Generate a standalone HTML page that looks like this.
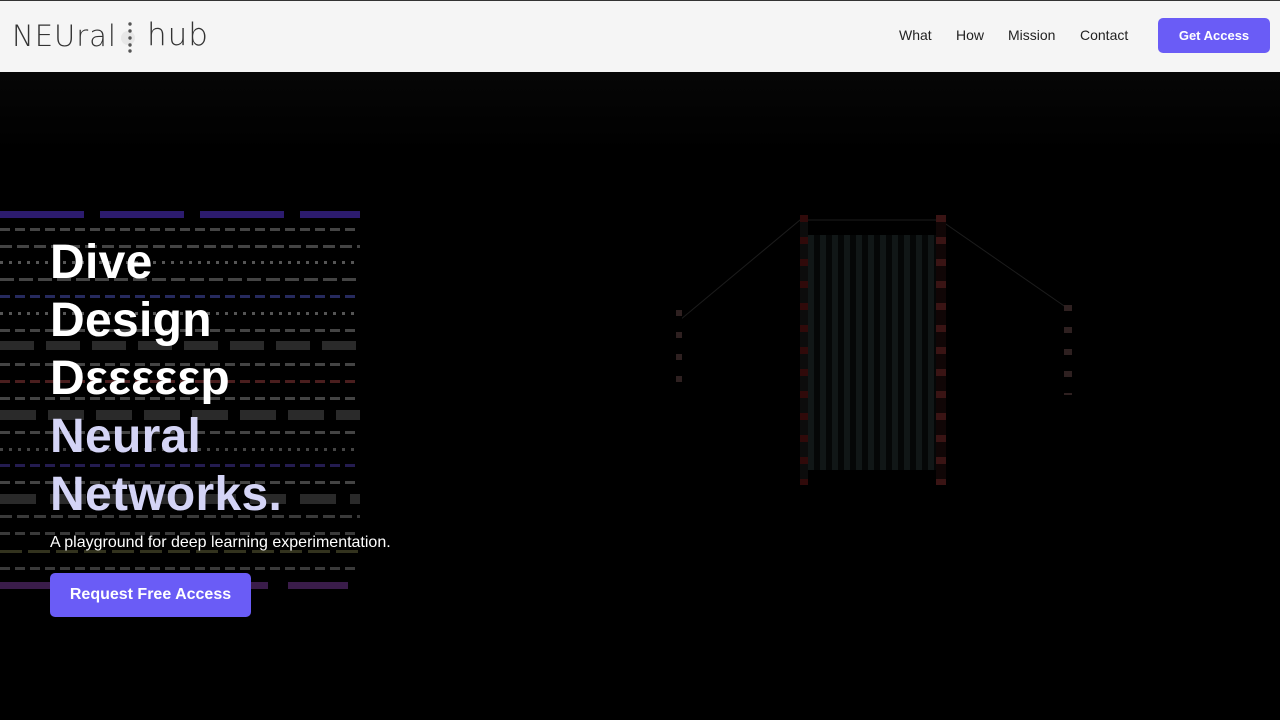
<!DOCTYPE html>
<html><head><meta charset="utf-8"><style>
*{margin:0;padding:0;box-sizing:border-box}
body{width:1280px;height:720px;overflow:hidden;background:#000;font-family:"Liberation Sans",sans-serif;position:relative}
.top{position:absolute;left:0;top:0;width:1280px;height:1px;background:#333}
nav{position:absolute;left:0;top:1px;width:1280px;height:71px;background:#f5f5f5}
.links a{position:absolute;top:26px;font-size:14px;color:#222;text-decoration:none}
.btn{position:absolute;background:#6a5cf6;color:#fff;font-weight:bold;border-radius:5px;text-align:center}
.row{position:absolute;left:0;width:360px}
.h{position:absolute;left:50px;font-weight:bold;font-size:48px;color:#fff;line-height:58px;letter-spacing:0.3px}
</style></head><body>
<div class="top"></div>
<nav>
<div style="position:absolute;left:12px;top:18px;font-family:'DejaVu Sans';font-weight:200;letter-spacing:1px;font-size:29px;color:#333">NEUral</div>
<svg style="position:absolute;left:114px;top:18px" width="30" height="34"><circle cx="14" cy="19" r="7" fill="#ddd" opacity=".6"/><circle cx="16" cy="5" r="1.7" fill="#555"/><circle cx="16" cy="12" r="1.7" fill="#555"/><circle cx="16" cy="19" r="1.7" fill="#555"/><circle cx="16" cy="26" r="1.7" fill="#555"/><circle cx="16" cy="32" r="1.7" fill="#555"/></svg>
<div style="position:absolute;left:147px;top:16px;font-family:'DejaVu Sans';font-size:31px;font-weight:200;color:#333;letter-spacing:1px">hub</div>
<div class="links"><a style="left:899px">What</a><a style="left:956px">How</a><a style="left:1008px">Mission</a><a style="left:1080px">Contact</a></div>
<div class="btn" style="left:1158px;top:17px;width:112px;height:35px;line-height:35px;font-size:13px">Get Access</div>
</nav>
<div style="position:absolute;left:0;top:72px;width:1280px;height:80px;background:linear-gradient(#060606,#000)"></div>
<div class="row" style="top:211px;height:7px;background:repeating-linear-gradient(90deg,#2c1b6e 0 84px,transparent 84px 100px)"></div>
<div class="row" style="top:228px;height:3px;background:repeating-linear-gradient(90deg,#444 0 10px,transparent 10px 15px)"></div>
<div class="row" style="top:245px;height:3px;background:repeating-linear-gradient(90deg,#444 0 12px,transparent 12px 17px)"></div>
<div class="row" style="top:261px;height:3px;background:repeating-linear-gradient(90deg,#555 0 3px,transparent 3px 9px)"></div>
<div class="row" style="top:278px;height:3px;background:repeating-linear-gradient(90deg,#444 0 14px,transparent 14px 19px)"></div>
<div class="row" style="top:295px;height:3px;background:repeating-linear-gradient(90deg,#262a5e 0 10px,transparent 10px 15px)"></div>
<div class="row" style="top:312px;height:3px;background:repeating-linear-gradient(90deg,#555 0 3px,transparent 3px 9px)"></div>
<div class="row" style="top:329px;height:3px;background:repeating-linear-gradient(90deg,#444 0 10px,transparent 10px 15px)"></div>
<div class="row" style="top:341px;height:9px;background:repeating-linear-gradient(90deg,#2a2a2a 0 34px,transparent 34px 46px)"></div>
<div class="row" style="top:363px;height:3px;background:repeating-linear-gradient(90deg,#444 0 10px,transparent 10px 15px)"></div>
<div class="row" style="top:380px;height:3px;background:repeating-linear-gradient(90deg,#4a1e1e 0 10px,transparent 10px 15px)"></div>
<div class="row" style="top:397px;height:3px;background:repeating-linear-gradient(90deg,#444 0 10px,transparent 10px 15px)"></div>
<div class="row" style="top:410px;height:10px;background:repeating-linear-gradient(90deg,#2a2a2a 0 36px,transparent 36px 48px)"></div>
<div class="row" style="top:431px;height:3px;background:repeating-linear-gradient(90deg,#444 0 10px,transparent 10px 15px)"></div>
<div class="row" style="top:448px;height:3px;background:repeating-linear-gradient(90deg,#444 0 3px,transparent 3px 9px)"></div>
<div class="row" style="top:464px;height:3px;background:repeating-linear-gradient(90deg,#241c50 0 10px,transparent 10px 15px)"></div>
<div class="row" style="top:481px;height:3px;background:repeating-linear-gradient(90deg,#444 0 10px,transparent 10px 15px)"></div>
<div class="row" style="top:494px;height:10px;background:repeating-linear-gradient(90deg,#2a2a2a 0 36px,transparent 36px 50px)"></div>
<div class="row" style="top:515px;height:3px;background:repeating-linear-gradient(90deg,#3a3a3a 0 12px,transparent 12px 17px)"></div>
<div class="row" style="top:532px;height:3px;background:repeating-linear-gradient(90deg,#3a3a3a 0 10px,transparent 10px 15px)"></div>
<div class="row" style="top:550px;height:3px;background:repeating-linear-gradient(90deg,#33331e 0 22px,transparent 22px 28px)"></div>
<div class="row" style="top:567px;height:3px;background:repeating-linear-gradient(90deg,#3a3a3a 0 10px,transparent 10px 15px)"></div>
<div class="row" style="top:582px;height:7px;width:348px;background:repeating-linear-gradient(90deg,#3a1c4a 0 76px,transparent 76px 96px)"></div>
<!-- right graphic -->
<svg style="position:absolute;left:670px;top:210px" width="420" height="290"><g stroke="#1c1c1c" fill="none"><path d="M10 110 L130 10 L270 10 L400 100"/></g></svg>
<div style="position:absolute;left:800px;top:215px;width:8px;height:270px;background:repeating-linear-gradient(#300a0a 0 7px,#0c0c0c 7px 22px)"></div>
<div style="position:absolute;left:936px;top:215px;width:10px;height:270px;background:repeating-linear-gradient(#3a1414 0 7px,#100606 7px 22px)"></div>
<div style="position:absolute;left:808px;top:235px;width:128px;height:235px;background:repeating-linear-gradient(90deg,#141c1c 0 6px,#070909 6px 12px),#0c0c0c;opacity:.85"></div>
<div style="position:absolute;left:676px;top:310px;width:6px;height:75px;background:repeating-linear-gradient(#2e2020 0 6px,#000 6px 22px)"></div>
<div style="position:absolute;left:1064px;top:305px;width:8px;height:90px;background:repeating-linear-gradient(#2e2020 0 6px,#000 6px 22px)"></div>
<div class="h" style="top:234px">Dive</div>
<div class="h" style="top:292px">Design</div>
<div class="h" style="top:350px">Dεεεεεp</div>
<div class="h" style="top:408px;color:#d4d4f6">Neural</div>
<div class="h" style="top:466px;color:#d4d4f6">Networks.</div>
<div style="position:absolute;left:50px;top:534px;font-size:16px;color:#fff">A playground for deep learning experimentation.</div>
<div class="btn" style="left:50px;top:573px;width:201px;height:44px;line-height:44px;font-size:16px">Request Free Access</div>
</body></html>
